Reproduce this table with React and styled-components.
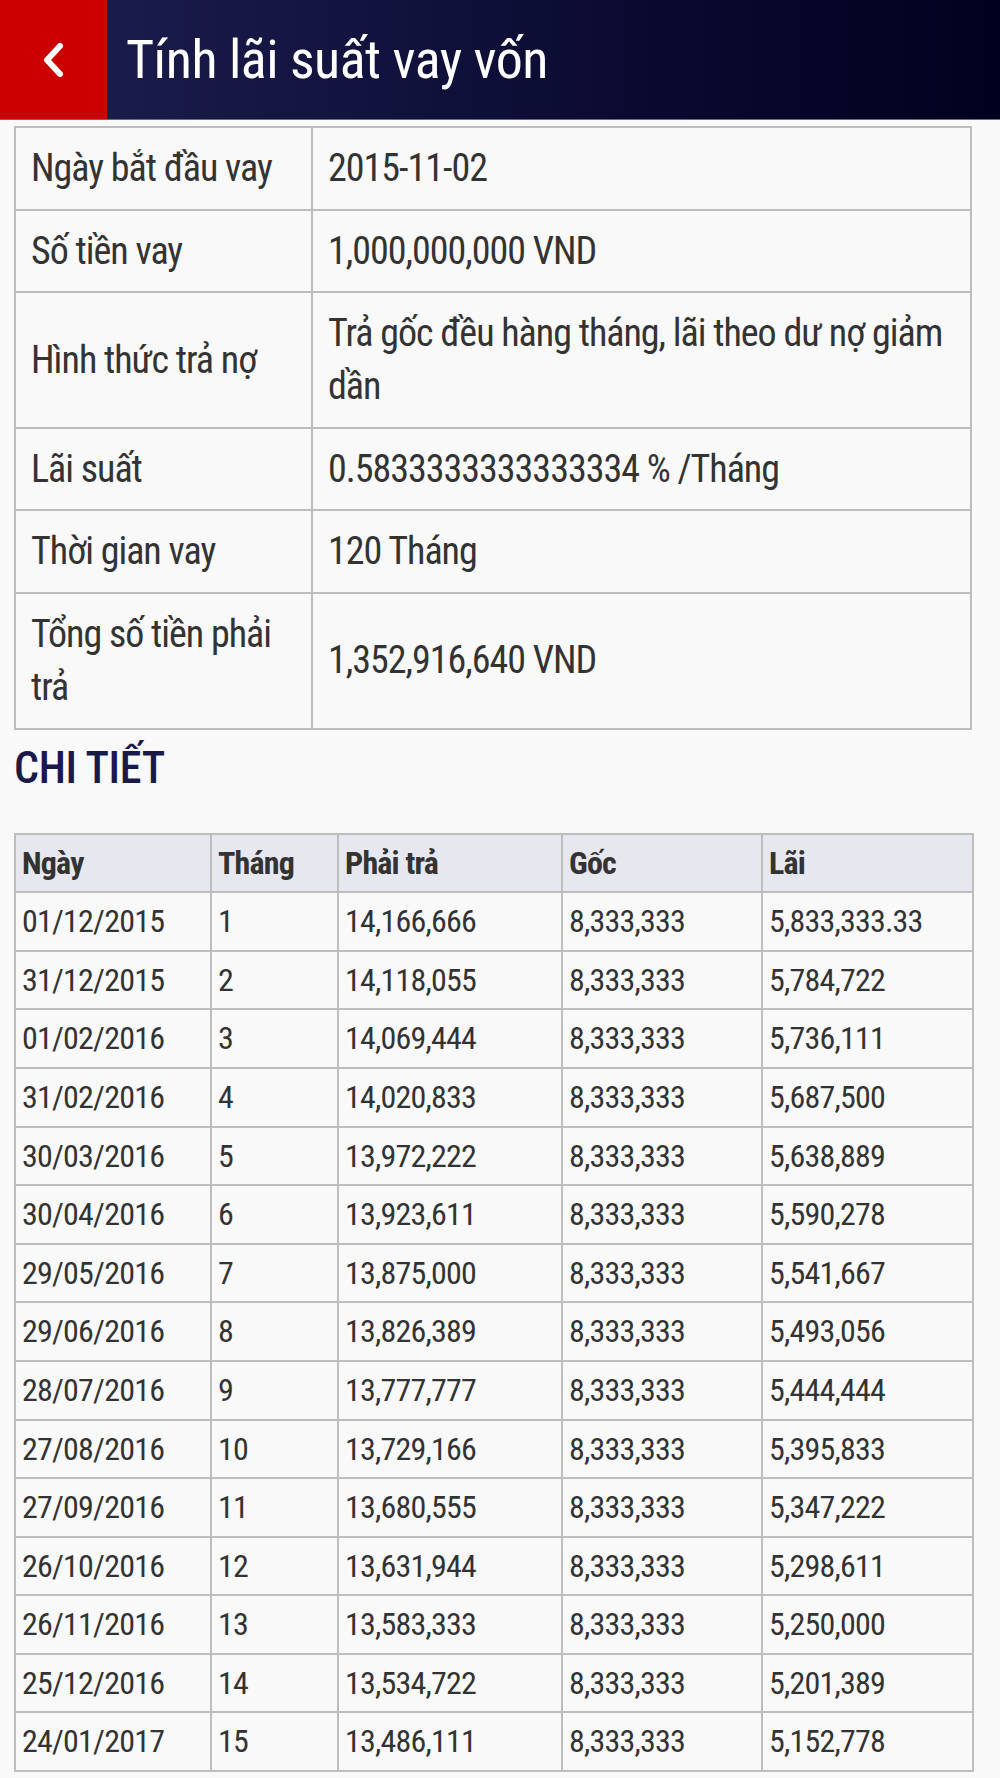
import React from 'react';
import styled, { createGlobalStyle } from 'styled-components';

const GlobalStyle = createGlobalStyle`
  html, body {
    margin: 0;
    padding: 0;
    background: #f9f9f9;
  }
  body {
    font-family: Roboto, "Liberation Sans", sans-serif;
    font-stretch: 82%;
    color: #333;
  }
`;

const summary = [
  { label: 'Ngày bắt đầu vay', value: '2015-11-02' },
  { label: 'Số tiền vay', value: '1,000,000,000 VND' },
  { label: 'Hình thức trả nợ', value: 'Trả gốc đều hàng tháng, lãi theo dư nợ giảm dần' },
  { label: 'Lãi suất', value: '0.5833333333333334 % /Tháng' },
  { label: 'Thời gian vay', value: '120 Tháng' },
  { label: 'Tổng số tiền phải trả', value: '1,352,916,640 VND' },
];

const schedule = [
  ['01/12/2015', '1', '14,166,666', '8,333,333', '5,833,333.33'],
  ['31/12/2015', '2', '14,118,055', '8,333,333', '5,784,722'],
  ['01/02/2016', '3', '14,069,444', '8,333,333', '5,736,111'],
  ['31/02/2016', '4', '14,020,833', '8,333,333', '5,687,500'],
  ['30/03/2016', '5', '13,972,222', '8,333,333', '5,638,889'],
  ['30/04/2016', '6', '13,923,611', '8,333,333', '5,590,278'],
  ['29/05/2016', '7', '13,875,000', '8,333,333', '5,541,667'],
  ['29/06/2016', '8', '13,826,389', '8,333,333', '5,493,056'],
  ['28/07/2016', '9', '13,777,777', '8,333,333', '5,444,444'],
  ['27/08/2016', '10', '13,729,166', '8,333,333', '5,395,833'],
  ['27/09/2016', '11', '13,680,555', '8,333,333', '5,347,222'],
  ['26/10/2016', '12', '13,631,944', '8,333,333', '5,298,611'],
  ['26/11/2016', '13', '13,583,333', '8,333,333', '5,250,000'],
  ['25/12/2016', '14', '13,534,722', '8,333,333', '5,201,389'],
  ['24/01/2017', '15', '13,486,111', '8,333,333', '5,152,778'],
];

const columns = [
  { title: 'Ngày', width: 196 },
  { title: 'Tháng', width: 127 },
  { title: 'Phải trả', width: 224 },
  { title: 'Gốc', width: 200 },
  { title: 'Lãi', width: 211 },
];

const Page = styled.div`
  min-height: 1778px;
  overflow: hidden;
`;

const TopBar = styled.header`
  display: flex;
  height: 119px;
  background: linear-gradient(90deg, #1d1f50 0%, #0b0b33 60%, #01011f 100%);
  border-bottom: 1px solid #6b6b85;
`;

const BackButton = styled.button`
  width: 107px;
  flex-shrink: 0;
  border: none;
  padding: 0;
  background: #cc0000;
  display: flex;
  align-items: center;
  justify-content: center;
  cursor: pointer;
`;

const Title = styled.h1`
  margin: 0;
  padding-left: 19px;
  display: flex;
  align-items: center;
  font-size: 54px;
  font-weight: 400;
  color: #fff;
  letter-spacing: -0.5px;
`;

const Content = styled.main`
  padding: 6px 28px 0 14px;
`;

const Grid = styled.table`
  width: 958px;
  border-collapse: collapse;
  table-layout: fixed;
  border: 2px solid #bdbdbd;
`;

const InfoCell = styled.td`
  border: 2px solid #bdbdbd;
  padding: 14px 12px 13.6px 15px;
  font-size: 38px;
  line-height: 53px;
  letter-spacing: -1px;
  color: #333;
  vertical-align: middle;
`;

const SectionTitle = styled.h2`
  margin: 0;
  padding: 8px 0 35px;
  font-size: 44px;
  line-height: 60px;
  font-weight: 500;
  letter-spacing: -0.3px;
  color: #1a1a4a;
`;

const HeadCell = styled.th`
  border: 2px solid #bdbdbd;
  background: #e7e7ef;
  padding: 6px 6px;
  font-size: 32px;
  line-height: 44.6px;
  font-weight: 700;
  letter-spacing: -0.8px;
  text-align: left;
  color: #333;
`;

const Cell = styled.td`
  border: 2px solid #bdbdbd;
  padding: 6px 6px;
  font-size: 32px;
  line-height: 44.6px;
  letter-spacing: -0.8px;
  color: #333;
  white-space: nowrap;
`;

const ChevronLeft = () => (
  <svg width="24" height="36" viewBox="0 0 24 36" fill="none">
    <polyline
      points="18,4 5,18 18,32"
      stroke="#fff"
      strokeWidth="6"
      strokeLinecap="round"
      strokeLinejoin="round"
    />
  </svg>
);

const App = () => (
  <Page>
    <GlobalStyle />
    <TopBar>
      <BackButton aria-label="Quay lại">
        <ChevronLeft />
      </BackButton>
      <Title>Tính lãi suất vay vốn</Title>
    </TopBar>
    <Content>
      <Grid>
        <colgroup>
          <col style={{ width: 297 }} />
          <col />
        </colgroup>
        <tbody>
          {summary.map(item => (
            <tr key={item.label}>
              <InfoCell>{item.label}</InfoCell>
              <InfoCell>{item.value}</InfoCell>
            </tr>
          ))}
        </tbody>
      </Grid>
      <SectionTitle>CHI TIẾT</SectionTitle>
      <Grid>
        <colgroup>
          {columns.map(col => (
            <col key={col.title} style={{ width: col.width }} />
          ))}
        </colgroup>
        <thead>
          <tr>
            {columns.map(col => (
              <HeadCell key={col.title}>{col.title}</HeadCell>
            ))}
          </tr>
        </thead>
        <tbody>
          {schedule.map(row => (
            <tr key={row[1]}>
              {row.map((value, i) => (
                <Cell key={i}>{value}</Cell>
              ))}
            </tr>
          ))}
        </tbody>
      </Grid>
    </Content>
  </Page>
);

export default App;
